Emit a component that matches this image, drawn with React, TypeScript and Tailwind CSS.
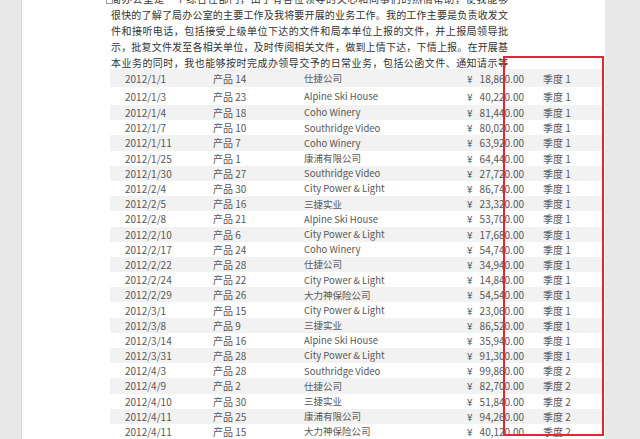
import React from "react";

const lines = [
  "局办公室是一个综合性部门，由于有各位领导的关心和同事们的热情帮助，使我能够",
  "很快的了解了局办公室的主要工作及我将要开展的业务工作。我的工作主要是负责收发文",
  "件和接听电话，包括接受上级单位下达的文件和局本单位上报的文件，并上报局领导批",
  "示，批复文件发至各相关单位，及时传阅相关文件，做到上情下达，下情上报。在开展基",
  "本业务的同时，我也能够按时完成办领导交予的日常业务，包括公函文件、通知请示等",
];

type Row = [string, string, string, string, string];

const rows: Row[] = [
  ["2012/1/1", "14", "仕捷公司", "18,860.00", "1"],
  ["2012/1/3", "23", "Alpine Ski House", "40,220.00", "1"],
  ["2012/1/4", "18", "Coho Winery", "81,440.00", "1"],
  ["2012/1/7", "10", "Southridge Video", "80,020.00", "1"],
  ["2012/1/11", "7", "Coho Winery", "63,920.00", "1"],
  ["2012/1/25", "1", "康浦有限公司", "64,440.00", "1"],
  ["2012/1/30", "27", "Southridge Video", "27,720.00", "1"],
  ["2012/2/4", "30", "City Power & Light", "86,740.00", "1"],
  ["2012/2/5", "16", "三捷实业", "23,320.00", "1"],
  ["2012/2/8", "21", "Alpine Ski House", "53,700.00", "1"],
  ["2012/2/10", "6", "City Power & Light", "17,680.00", "1"],
  ["2012/2/17", "24", "Coho Winery", "54,740.00", "1"],
  ["2012/2/22", "28", "仕捷公司", "34,940.00", "1"],
  ["2012/2/24", "22", "City Power & Light", "14,840.00", "1"],
  ["2012/2/29", "26", "大力神保险公司", "54,540.00", "1"],
  ["2012/3/1", "15", "City Power & Light", "23,060.00", "1"],
  ["2012/3/8", "9", "三捷实业", "86,520.00", "1"],
  ["2012/3/14", "16", "Alpine Ski House", "35,940.00", "1"],
  ["2012/3/31", "28", "City Power & Light", "91,300.00", "1"],
  ["2012/4/3", "28", "Southridge Video", "99,860.00", "2"],
  ["2012/4/9", "2", "仕捷公司", "82,700.00", "2"],
  ["2012/4/10", "30", "三捷实业", "51,840.00", "2"],
  ["2012/4/11", "25", "康浦有限公司", "94,260.00", "2"],
  ["2012/4/11", "15", "大力神保险公司", "40,120.00", "2"],
];

export default function App() {
  return (
    <div className="relative flex h-[439px] w-[640px] overflow-hidden bg-[#e8e8e8] font-['Noto_Sans_CJK_SC',sans-serif]">
      <div className="w-[22px] shrink-0 border-r border-[#d6d6d6] bg-[#e8e8e8]" />
      <div className="relative w-[583px] shrink-0 bg-white pl-[88px]">
        <div className="absolute left-[84px] top-[-3px] h-[7px] w-[7px] border border-[#9a9a9a] bg-white" />
        <div className="mt-[-10px] w-[398px] pl-[1px] text-[10px] text-[#333333]">
          {lines.map((l, i) => (
            <div
              key={i}
              className={
                "leading-[16px] text-justify [text-align-last:justify] " +
                (i === 0 ? "h-[17px] pt-[1px]" : "h-[16px]")
              }
            >
              {l}
            </div>
          ))}
        </div>
        <div className="mt-[-2px] w-[492px] text-[10px] text-[#575757]">
          {rows.map((r, i) => (
            <div
              key={i}
              className={
                "flex items-center pl-[15px] " +
                (i < 2 ? "h-[18px] " : "h-[15.2px] ") +
                (i % 2 === 0 ? "bg-[#f2f2f2]" : "bg-white")
              }
            >
              <div className="w-[88px] shrink-0 whitespace-nowrap">{r[0]}</div>
              <div className="w-[91px] shrink-0 whitespace-nowrap">产品 {r[1]}</div>
              <div className="w-[163px] shrink-0 whitespace-nowrap text-[9.5px]">{r[2]}</div>
              <div className="flex w-[57px] shrink-0 justify-between whitespace-nowrap">
                <span>¥</span>
                <span>{r[3]}</span>
              </div>
              <div className="ml-[19px] whitespace-nowrap">季度 {r[4]}</div>
            </div>
          ))}
        </div>
      </div>
      <div className="flex-1 bg-[#e8e8e8]" />
      <div className="absolute left-[503px] top-[56px] h-[380px] w-[101px] border-2 border-[#e3262f]" />
    </div>
  );
}
